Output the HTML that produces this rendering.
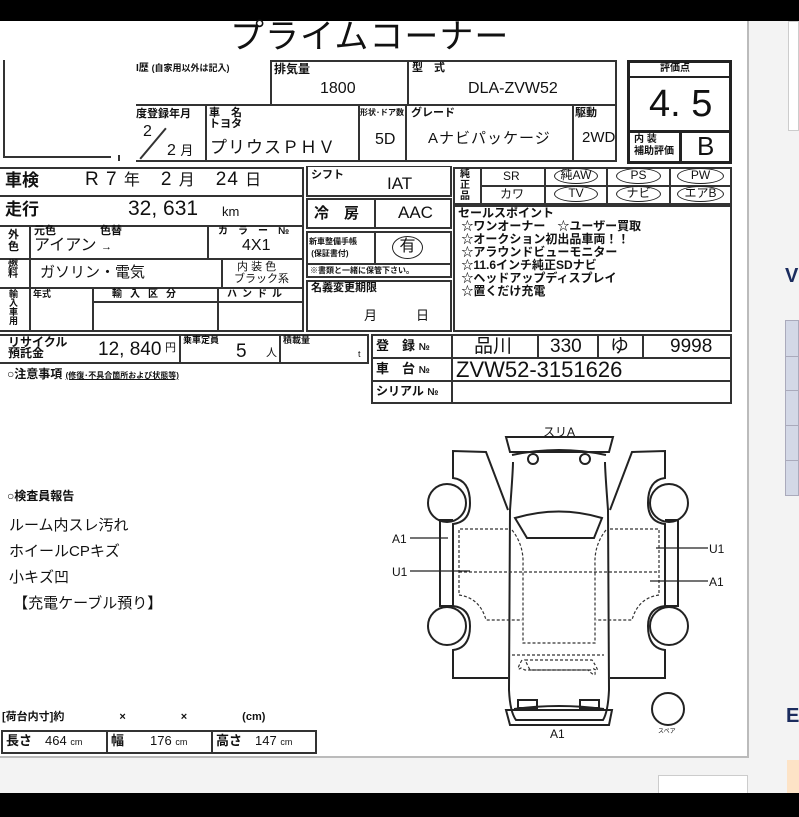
<!DOCTYPE html>
<html><head><meta charset="utf-8"><style>
*{margin:0;padding:0;box-sizing:border-box}
body{width:799px;height:817px;overflow:hidden;background:#f3f3f3;font-family:"Liberation Sans","Noto Sans CJK JP",sans-serif;color:#111;position:relative}
.a{position:absolute}
.b{position:absolute;border:2px solid #333}
.t{position:absolute;white-space:nowrap;line-height:1}
.s{font-size:10px;font-weight:bold}
.m{font-size:16px}
.l{font-size:20px}
.ov{position:absolute;border:1.5px solid #222;border-radius:50%;font-size:12px;text-align:center;line-height:13px;height:16px}
</style></head><body>
<div class="a" style="left:0;top:0;width:799px;height:21px;background:#000"></div>
<div class="a" style="left:0;top:793px;width:799px;height:24px;background:#000"></div>
<div class="a" style="left:0;top:21px;width:749px;height:737px;background:#fff;border-right:2px solid #bbb;border-bottom:2px solid #bbb"></div>
<div class="a" style="left:658px;top:775px;width:90px;height:18px;background:#fff;border:1px solid #ccc;border-bottom:none"></div>
<!-- right strip -->
<div class="a" style="left:788px;top:21px;width:11px;height:110px;background:#fff;border:1px solid #ccc"></div>
<div class="t" style="left:785px;top:266px;font-size:20px;font-weight:bold;color:#1b2c5e">V</div>
<div class="a" style="left:785px;top:320px;width:14px;height:176px;background:#d3d8e6;border:1px solid #aab"></div>
<div class="a" style="left:785px;top:356px;width:14px;height:1px;background:#aab"></div>
<div class="a" style="left:785px;top:390px;width:14px;height:1px;background:#aab"></div>
<div class="a" style="left:785px;top:425px;width:14px;height:1px;background:#aab"></div>
<div class="a" style="left:785px;top:460px;width:14px;height:1px;background:#aab"></div>
<div class="t" style="left:786px;top:706px;font-size:20px;font-weight:bold;color:#1b2c5e">E</div>
<div class="a" style="left:787px;top:760px;width:12px;height:33px;background:#fde3c6"></div>

<div class="t" style="left:230px;top:20px;font-size:34px;letter-spacing:1px">プライムコーナー</div>
<div class="a" style="left:3px;top:60px;width:2px;height:98px;background:#333"></div>
<div class="a" style="left:3px;top:156px;width:108px;height:2px;background:#333"></div>
<div class="a" style="left:118px;top:155px;width:2px;height:6px;background:#333"></div>

<!-- row1 -->
<div class="b" style="left:136px;top:60px;width:136px;height:46px;border-left:none;border-top:none"></div>
<div class="t s" style="left:136px;top:64px">I歴 <span style="font-size:9px">(自家用以外は記入)</span></div>
<div class="b" style="left:270px;top:60px;width:139px;height:46px"></div>
<div class="t s" style="left:274px;top:63px;font-size:12px">排気量</div>
<div class="t m" style="left:320px;top:81px">1800</div>
<div class="b" style="left:407px;top:60px;width:210px;height:46px"></div>
<div class="t s" style="left:412px;top:63px;font-size:11px">型　式</div>
<div class="t m" style="left:468px;top:81px">DLA-ZVW52</div>
<!-- row2 -->
<div class="b" style="left:136px;top:104px;width:71px;height:58px;border-left:none"></div>
<div class="t s" style="left:136px;top:109px;font-size:11px">度登録年月</div>
<div class="t m" style="left:143px;top:124px">2</div>
<div class="a" style="left:140px;top:124px;width:40px;height:1.5px;background:#333;transform-origin:left;transform:translate(0,34px) rotate(-50deg)"></div>
<div class="t m" style="left:167px;top:143px">2 <span style="font-size:13px">月</span></div>
<div class="b" style="left:205px;top:104px;width:155px;height:58px"></div>
<div class="t s" style="left:209px;top:108px;font-size:11px">車　名<br>トヨタ</div>
<div class="t" style="left:210px;top:139px;font-size:17px;letter-spacing:1px">プリウスＰＨＶ</div>
<div class="b" style="left:358px;top:104px;width:49px;height:58px"></div>
<div class="t" style="left:360px;top:109px;font-size:8px;font-weight:bold">形状･ドア数</div>
<div class="t m" style="left:375px;top:132px">5D</div>
<div class="b" style="left:405px;top:104px;width:169px;height:58px"></div>
<div class="t s" style="left:411px;top:108px;font-size:11px">グレード</div>
<div class="t" style="left:428px;top:131px;font-size:15px;letter-spacing:1px">Aナビパッケージ</div>
<div class="b" style="left:572px;top:104px;width:45px;height:58px"></div>
<div class="t s" style="left:575px;top:108px;font-size:11px">駆動</div>
<div class="t" style="left:582px;top:130px;font-size:15px">2WD</div>
<!-- score -->
<div class="a" style="left:627px;top:60px;width:105px;height:104px;border:3px solid #222"></div>
<div class="a" style="left:627px;top:76px;width:105px;height:2px;background:#222"></div>
<div class="t s" style="left:660px;top:64px">評価点</div>
<div class="t" style="left:649px;top:85px;font-size:38px">4. 5</div>
<div class="a" style="left:627px;top:130px;width:105px;height:3px;background:#222"></div>
<div class="a" style="left:679px;top:130px;width:3px;height:34px;background:#222"></div>
<div class="t s" style="left:634px;top:134px;font-size:10px;line-height:12px">内 装<br>補助評価</div>
<div class="t" style="left:697px;top:133px;font-size:26px">B</div>

<!-- left grid -->
<div class="b" style="left:0;top:167px;width:304px;height:30px;border-left:none"></div>
<div class="t" style="left:5px;top:172px;font-size:17px;font-weight:bold">車検</div>
<div class="t" style="left:85px;top:170px;font-size:19px;letter-spacing:1px">R 7 <span style="font-size:16px">年</span>　2 <span style="font-size:16px">月</span>　24 <span style="font-size:16px">日</span></div>
<div class="b" style="left:0;top:195px;width:304px;height:32px;border-left:none"></div>
<div class="t" style="left:5px;top:201px;font-size:17px;font-weight:bold">走行</div>
<div class="t" style="left:128px;top:198px;font-size:21px">32, 631</div>
<div class="t" style="left:222px;top:205px;font-size:13px">km</div>
<div class="b" style="left:0;top:225px;width:304px;height:35px;border-left:none"></div>
<div class="a" style="left:29px;top:225px;width:2px;height:35px;background:#333"></div>
<div class="a" style="left:207px;top:225px;width:2px;height:35px;background:#333"></div>
<div class="t s" style="left:8px;top:229px;font-size:11px;line-height:12px">外<br>色</div>
<div class="t s" style="left:34px;top:226px;font-size:11px">元色　　　　色替</div>
<div class="t" style="left:34px;top:238px;font-size:16px">アイアン <span style="font-size:11px">→</span></div>
<div class="t s" style="left:218px;top:227px;font-size:10px">カ　ラ　ー　№</div>
<div class="t" style="left:242px;top:238px;font-size:16px">4X1</div>
<div class="b" style="left:0;top:258px;width:304px;height:31px;border-left:none"></div>
<div class="a" style="left:29px;top:258px;width:2px;height:31px;background:#333"></div>
<div class="a" style="left:221px;top:258px;width:2px;height:31px;background:#333"></div>
<div class="t s" style="left:8px;top:261px;font-size:10px;line-height:9px">燃<br>料</div>
<div class="t" style="left:40px;top:265px;font-size:15px">ガソリン・電気</div>
<div class="t" style="left:234px;top:261px;font-size:11px;line-height:12px">&nbsp;内 装 色<br>ブラック系</div>
<div class="b" style="left:0;top:287px;width:304px;height:45px;border-left:none"></div>
<div class="a" style="left:29px;top:287px;width:2px;height:45px;background:#333"></div>
<div class="a" style="left:92px;top:287px;width:2px;height:45px;background:#333"></div>
<div class="a" style="left:217px;top:287px;width:2px;height:45px;background:#333"></div>
<div class="a" style="left:93px;top:301px;width:210px;height:2px;background:#333"></div>
<div class="t s" style="left:9px;top:290px;font-size:9px;line-height:9px">輸<br>入<br>車<br>用</div>
<div class="t s" style="left:33px;top:290px;font-size:9px">年式</div>
<div class="t s" style="left:112px;top:290px;font-size:10px;letter-spacing:8px">輸入区分</div>
<div class="t s" style="left:227px;top:290px;font-size:10px;letter-spacing:5px">ハンドル</div>

<!-- middle col -->
<div class="b" style="left:306px;top:166px;width:146px;height:31px;border-top:1px solid #333"></div>
<div class="t s" style="left:311px;top:170px;font-size:11px">シフト</div>
<div class="t" style="left:387px;top:175px;font-size:17px">IAT</div>
<div class="b" style="left:306px;top:198px;width:146px;height:31px"></div>
<div class="a" style="left:374px;top:198px;width:2px;height:31px;background:#333"></div>
<div class="t" style="left:314px;top:206px;font-size:15px;font-weight:bold">冷　房</div>
<div class="t" style="left:398px;top:204px;font-size:17px">AAC</div>
<div class="b" style="left:306px;top:231px;width:146px;height:47px"></div>
<div class="a" style="left:374px;top:231px;width:2px;height:33px;background:#333"></div>
<div class="a" style="left:306px;top:263px;width:146px;height:2px;background:#333"></div>
<div class="t" style="left:309px;top:236px;font-size:8px;font-weight:bold;line-height:12px">新車整備手帳<br>&nbsp;(保証書付)</div>
<div class="t" style="left:392px;top:236px;width:31px;height:23px;border:1.5px solid #222;border-radius:50%;font-size:16px;text-align:center;line-height:20px">有</div>
<div class="t" style="left:310px;top:267px;font-size:8px;font-weight:bold">※書類と一緒に保管下さい。</div>
<div class="b" style="left:306px;top:280px;width:146px;height:52px"></div>
<div class="t s" style="left:311px;top:283px;font-size:11px">名義変更期限</div>
<div class="t" style="left:364px;top:309px;font-size:13px">月　　　日</div>

<!-- equipment -->
<div class="b" style="left:453px;top:167px;width:279px;height:38px"></div>
<div class="a" style="left:480px;top:167px;width:2px;height:38px;background:#333"></div>
<div class="a" style="left:480px;top:185px;width:252px;height:1.5px;background:#333"></div>
<div class="a" style="left:544px;top:167px;width:1.5px;height:38px;background:#333"></div>
<div class="a" style="left:606px;top:167px;width:1.5px;height:38px;background:#333"></div>
<div class="a" style="left:669px;top:167px;width:1.5px;height:38px;background:#333"></div>
<div class="t s" style="left:460px;top:169px;font-size:10px;line-height:11px">純<br>正<br>品</div>
<div class="t" style="left:503px;top:170px;font-size:12px">SR</div>
<div class="t" style="left:500px;top:188px;font-size:12px">カワ</div>
<div class="ov" style="left:554px;top:168px;width:44px">純AW</div>
<div class="ov" style="left:616px;top:168px;width:45px">PS</div>
<div class="ov" style="left:677px;top:168px;width:47px">PW</div>
<div class="ov" style="left:554px;top:186px;width:44px">TV</div>
<div class="ov" style="left:616px;top:186px;width:45px">ナビ</div>
<div class="ov" style="left:677px;top:186px;width:47px">エアB</div>
<div class="b" style="left:453px;top:205px;width:279px;height:127px"></div>
<div class="t" style="left:458px;top:207px;font-size:12px;font-weight:bold;line-height:13px">セールスポイント<br>&nbsp;☆ワンオーナー　☆ユーザー買取<br>&nbsp;☆オークション初出品車両！！<br>&nbsp;☆アラウンドビューモニター<br>&nbsp;☆11.6インチ純正SDナビ<br>&nbsp;☆ヘッドアップディスプレイ<br>&nbsp;☆置くだけ充電</div>

<!-- recycle -->
<div class="b" style="left:0;top:334px;width:369px;height:30px;border-left:none"></div>
<div class="a" style="left:179px;top:334px;width:2px;height:30px;background:#333"></div>
<div class="a" style="left:279px;top:334px;width:2px;height:30px;background:#333"></div>
<div class="t s" style="left:8px;top:337px;font-size:12px;line-height:11px">リサイクル<br>預託金</div>
<div class="t" style="left:98px;top:340px;font-size:19px">12, 840</div>
<div class="t" style="left:165px;top:343px;font-size:11px">円</div>
<div class="t s" style="left:183px;top:336px;font-size:9px">乗車定員</div>
<div class="t" style="left:236px;top:342px;font-size:19px">5</div>
<div class="t" style="left:266px;top:348px;font-size:11px">人</div>
<div class="t s" style="left:283px;top:336px;font-size:9px">積載量</div>
<div class="t" style="left:358px;top:350px;font-size:9px">t</div>
<div class="b" style="left:371px;top:334px;width:361px;height:70px"></div>
<div class="a" style="left:371px;top:357px;width:361px;height:2px;background:#333"></div>
<div class="a" style="left:371px;top:380px;width:361px;height:2px;background:#333"></div>
<div class="a" style="left:451px;top:334px;width:2px;height:70px;background:#333"></div>
<div class="a" style="left:537px;top:334px;width:2px;height:24px;background:#333"></div>
<div class="a" style="left:597px;top:334px;width:2px;height:24px;background:#333"></div>
<div class="a" style="left:642px;top:334px;width:2px;height:24px;background:#333"></div>
<div class="t s" style="left:376px;top:339px;font-size:13px">登　録 <span style="font-size:10px">№</span></div>
<div class="t s" style="left:376px;top:362px;font-size:13px">車　台 <span style="font-size:10px">№</span></div>
<div class="t s" style="left:376px;top:385px;font-size:12px">シリアル <span style="font-size:10px">№</span></div>
<div class="t" style="left:474px;top:337px;font-size:19px">品川</div>
<div class="t" style="left:550px;top:337px;font-size:19px">330</div>
<div class="t" style="left:610px;top:337px;font-size:19px">ゆ</div>
<div class="t" style="left:670px;top:337px;font-size:19px">9998</div>
<div class="t" style="left:456px;top:359px;font-size:22px">ZVW52-3151626</div>

<div class="t" style="left:7px;top:368px;font-size:12px;font-weight:bold">○注意事項 <span style="font-size:8px;text-decoration:underline">(修復･不具合箇所および状態等)</span></div>
<div class="t" style="left:7px;top:490px;font-size:12px;font-weight:bold">○検査員報告</div>
<div class="t" style="left:9px;top:513px;font-size:15px;line-height:26px">ルーム内スレ汚れ<br>ホイールCPキズ<br>小キズ凹<br>&nbsp;【充電ケーブル預り】</div>

<div class="t s" style="left:2px;top:712px;font-size:11px">[荷台内寸]約　　　　　×　　　　　×　　　　　(cm)</div>
<div class="b" style="left:1px;top:730px;width:316px;height:24px"></div>
<div class="a" style="left:106px;top:730px;width:2px;height:24px;background:#333"></div>
<div class="a" style="left:211px;top:730px;width:2px;height:24px;background:#333"></div>
<div class="t" style="left:6px;top:734px;font-size:13px"><b>長さ</b>　464 <span style="font-size:9px">cm</span></div>
<div class="t" style="left:111px;top:734px;font-size:13px"><b>幅</b>　　176 <span style="font-size:9px">cm</span></div>
<div class="t" style="left:216px;top:734px;font-size:13px"><b>高さ</b>　147 <span style="font-size:9px">cm</span></div>

<!-- car diagram -->
<svg class="a" style="left:0;top:0" width="749" height="760" viewBox="0 0 749 760">
<g fill="none" stroke="#222" stroke-width="2">
<path d="M506 437 L613 437 L609 452 L510 452 Z"/>
<path d="M512 455 Q559 445 606 455"/>
<circle cx="533" cy="459" r="5"/><circle cx="585" cy="459" r="5"/>
<path d="M513 462 Q513 470 510 510 L509 690 Q510 712 516 720 L603 720 Q608 712 609 690 L608 510 Q605 470 605 462"/>
<path d="M514 709 Q559 703 604 709"/>
<rect x="518" y="700" width="19" height="8"/><rect x="580" y="700" width="19" height="8"/>
<path d="M506 710 L612 710 L609 725 L510 725 Z"/>
<path d="M515 518 Q559 505 602 518 L594 538 L527 538 Z"/>
<path d="M508 510 L486 452 L453 451 L453 478 Q470 480 470 503 Q470 522 453 524 L453 606 Q470 608 470 626 Q470 648 453 650 L453 678 L508 678"/>
<path d="M453 520 L440 520 L440 606 L453 606"/>
<path d="M610 510 L632 452 L665 451 L665 478 Q648 480 648 503 Q648 522 665 524 L665 606 Q648 608 648 626 Q648 648 665 650 L665 678 L610 678"/>
<path d="M665 520 L678 520 L678 606 L665 606"/>
<circle cx="447" cy="503" r="19"/><circle cx="447" cy="626" r="19"/>
<circle cx="669" cy="503" r="19"/><circle cx="669" cy="626" r="19"/>
<circle cx="668" cy="709" r="16"/>
</g>
<g fill="none" stroke="#333" stroke-width="1.2" stroke-dasharray="3 2">
<path d="M508 529 L459 529 L459 595 Q480 598 486 620 L522 620"/>
<path d="M610 529 L659 529 L659 595 Q638 598 632 620 L596 620"/>
<path d="M459 572 L659 572"/>
<path d="M512 530 Q524 545 523 565 L523 643 L595 643 L595 565 Q594 545 606 530"/>
<path d="M512 655 L604 655"/>
<path d="M525 660 L592 660 Q600 672 596 670 L594 669 Q598 680 588 670 L530 670 Z" />
<path d="M522 660 Q515 672 521 668 L525 670 L527 670 L593 670"/>
</g>
<g stroke="#222" stroke-width="1.2">
<line x1="410" y1="538" x2="448" y2="538"/>
<line x1="410" y1="571" x2="470" y2="571"/>
<line x1="656" y1="548" x2="708" y2="548"/>
<line x1="650" y1="581" x2="708" y2="581"/>
</g>
<g font-family="Liberation Sans, Noto Sans CJK JP, sans-serif" font-size="12" fill="#111">
<text x="543" y="436">スリA</text>
<text x="392" y="543">A1</text>
<text x="392" y="576">U1</text>
<text x="709" y="553">U1</text>
<text x="709" y="586">A1</text>
<text x="550" y="738">A1</text>
<text x="658" y="733" font-size="6">スペア</text>
</g>
</svg>
</body></html>
